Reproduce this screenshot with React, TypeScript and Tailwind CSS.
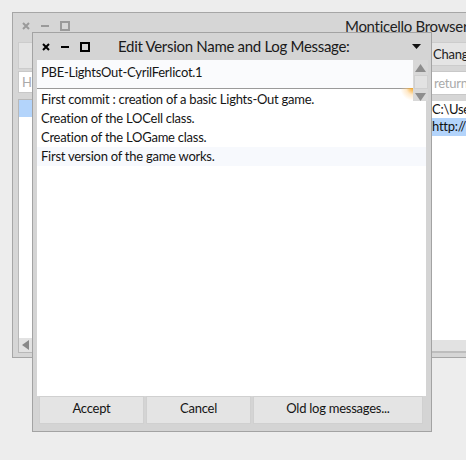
import React from "react";

const font = { fontFamily: "Lato, 'Noto Sans', sans-serif" };

function WinControls({ color }: { color: string }) {
  return (
    <div className="flex items-center gap-[11px]">
      <svg width="8" height="8" viewBox="0 0 8 8">
        <path d="M1 1 L7 7 M7 1 L1 7" stroke={color} strokeWidth="2" />
      </svg>
      <svg width="8" height="8" viewBox="0 0 8 8">
        <rect x="0" y="3" width="8" height="2" fill={color} />
      </svg>
      <svg width="10" height="10" viewBox="0 0 10 10">
        <rect x="1" y="1" width="8" height="8" fill="none" stroke={color} strokeWidth="2" />
      </svg>
    </div>
  );
}

function BackWindow() {
  return (
    <div className="absolute left-[12px] top-[12px] w-[470px] h-[346px] border border-[#a6a6a6] bg-[#d6d6d6] flex flex-col">
      <div className="h-[26px] flex items-center pl-[9px]">
        <WinControls color="#9a9a9a" />
        <span className="ml-[275px] whitespace-nowrap text-[15px] tracking-[-0.3px] text-[#222]">Monticello Browser</span>
      </div>
      <div className="flex-1 flex px-[5px] pb-[4px] gap-0">
        <div className="w-[408px] shrink-0 flex flex-col">
          <div className="h-[27px] mt-[3px] bg-[#e4e4e4] border border-[#cccccc]" />
          <div className="h-[22px] mt-[2px] bg-white border border-[#c8c8c8] px-[3px] text-[13px] text-[#aaa] leading-[20px]">Hi</div>
          <div className="flex-1 mt-[6px] bg-white border border-[#b8b8b8] flex flex-col">
            <div className="h-[17px] bg-[#b3d4fb]" />
            <div className="flex-1" />
            <div className="h-[14px] w-[14px] bg-[#e2e2e2] flex items-center justify-center">
              <svg width="8" height="10" viewBox="0 0 8 10"><path d="M7 0 L0 5 L7 10 Z" fill="#888" /></svg>
            </div>
          </div>
        </div>
        <div className="w-[5px] shrink-0 bg-[#cfcfcf] border-r border-[#9e9e9e]" />
        <div className="flex-1 min-w-0 overflow-hidden flex flex-col whitespace-nowrap tracking-[-0.25px]">
          <div className="h-[24px] mt-[3px] bg-[#e4e4e4] border border-[#cccccc] px-[1px] text-[13px] text-[#222] leading-[22px]">Changes</div>
          <div className="h-[24px] mt-[5px] bg-white border border-[#c8c8c8] px-[2px] text-[13px] text-[#aaa] leading-[22px]">return</div>
          <div className="flex-1 mt-[6px] bg-white flex flex-col text-[13px] text-[#111] leading-[17px]">
            <div className="h-[17px] px-[1px]">C:\Users</div>
            <div className="h-[18px] px-[1px] bg-[#b3d4fb]">http://</div>
            <div className="flex-1" />
            <div className="h-[13px] bg-[#e2e2e2] border-b-2 border-[#bdbdbd]" />
          </div>
        </div>
      </div>
    </div>
  );
}

function Dialog() {
  const lines = [
    "First commit : creation of a basic Lights-Out game.",
    "Creation of the LOCell class.",
    "Creation of the LOGame class.",
    "First version of the game works.",
  ];
  return (
    <div className="absolute left-[32px] top-[32px] w-[400px] h-[400px] border border-[#a3a3a3] bg-[#d4d4d4] flex flex-col">
      <div className="h-[27px] flex items-center pl-[9px] pr-[10px]">
        <WinControls color="#000" />
        <span className="ml-[28px] text-[15px] tracking-[-0.3px] text-[#1a1a1a]">Edit Version Name and Log Message:</span>
        <svg className="ml-auto" width="9" height="5" viewBox="0 0 9 5"><path d="M0 0 L9 0 L4.5 5 Z" fill="#111" /></svg>
      </div>
      <div className="flex-1 flex flex-col pl-[4px] pr-[3px] relative text-[13px] tracking-[-0.25px] text-[#151515]">
        <div className="h-[29px] mr-[15px] bg-[#fafbfd] border-b border-[#9a9a9a] px-[4px] leading-[24px]">
          PBE-LightsOut-CyrilFerlicot.1
        </div>
        <div className="absolute right-[3px] top-0 w-[15px] h-[41px] bg-[#d8d8d8] flex flex-col items-center">
          <svg className="mt-[4px]" width="11" height="8" viewBox="0 0 11 8"><path d="M5.5 0 L11 8 L0 8 Z" fill="#8d8d8d" /></svg>
          <div className="mt-[3px] w-[14px] h-[14px] bg-[#e2e2e2] border border-[#d0d0d0]" />
          <svg className="mt-[4px]" width="11" height="8" viewBox="0 0 11 8"><path d="M0 0 L11 0 L5.5 8 Z" fill="#8d8d8d" /></svg>
        </div>
        <div className="absolute left-[368px] top-[28px] w-[12px] h-[12px] bg-[radial-gradient(circle_at_100%_0%,#f5a623_0%,rgba(255,200,120,0.4)_40%,rgba(255,255,255,0)_75%)]" />
        <div className="flex-1 bg-white mr-[2px] pt-[1px] leading-[19px]">
          {lines.map((l, i) => (
            <div key={i} className={`h-[19px] px-[4px] ${i === 3 ? "bg-[#f7f9fd]" : ""}`}>{l}</div>
          ))}
        </div>
        <div className="h-[29px] flex gap-[2px] pl-[2px] pr-[5px] pb-[1px]">
          <button className="w-[105px] bg-[#e4e4e4] border border-[#d0d0d0] pb-[2px]">Accept</button>
          <button className="w-[105px] bg-[#e4e4e4] border border-[#d0d0d0] pb-[2px]">Cancel</button>
          <button className="flex-1 bg-[#e4e4e4] border border-[#d0d0d0] pb-[2px]">Old log messages...</button>
        </div>
        <div className="h-[6px]" />
      </div>
    </div>
  );
}

export default function App() {
  return (
    <div className="relative w-[466px] h-[460px] bg-[#ededed] overflow-hidden" style={font}>
      <BackWindow />
      <Dialog />
    </div>
  );
}
